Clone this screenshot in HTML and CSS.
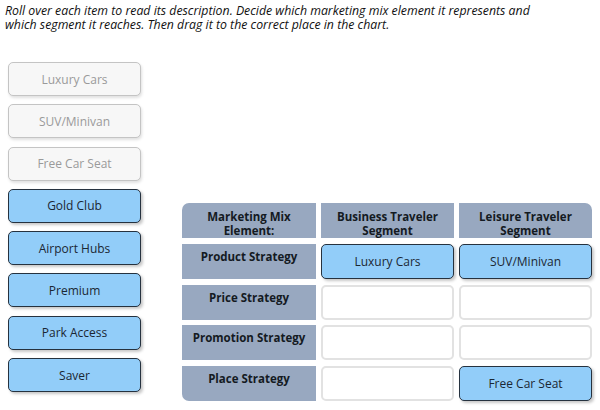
FILE: index.html
```html
<!DOCTYPE html>
<html>
<head>
<meta charset="utf-8">
<link rel="stylesheet" href="styles.css">
</head>
<body>
<div class="page">
  <p class="intro">Roll over each item to read its description. Decide which marketing mix element it represents and which segment it reaches. Then drag it to the correct place in the chart.</p>
  <div class="work">
    <div class="bank">
      <div class="chip used">Luxury Cars</div>
      <div class="chip used">SUV/Minivan</div>
      <div class="chip used">Free Car Seat</div>
      <div class="chip">Gold Club</div>
      <div class="chip">Airport Hubs</div>
      <div class="chip">Premium</div>
      <div class="chip">Park Access</div>
      <div class="chip">Saver</div>
    </div>
    <div class="chart">
      <div class="head tl">Marketing Mix<br>Element:</div>
      <div class="head">Business Traveler<br>Segment</div>
      <div class="head tr">Leisure Traveler<br>Segment</div>

      <div class="label">Product Strategy</div>
      <div class="drop filled">Luxury Cars</div>
      <div class="drop filled">SUV/Minivan</div>

      <div class="label">Price Strategy</div>
      <div class="drop"></div>
      <div class="drop"></div>

      <div class="label">Promotion Strategy</div>
      <div class="drop"></div>
      <div class="drop"></div>

      <div class="label bl">Place Strategy</div>
      <div class="drop"></div>
      <div class="drop filled">Free Car Seat</div>
    </div>
  </div>
</div>
</body>
</html>
```
FILE: styles.css
```css
html, body {
  margin: 0;
  padding: 0;
  background: #ffffff;
}
.page {
  width: 600px;
  height: 410px;
  font-family: "Open Sans", "Noto Sans", sans-serif;
  color: #1a1a1a;
  box-sizing: border-box;
  padding: 4px 0 0 5px;
}
.intro {
  margin: 0;
  font-style: italic;
  font-size: 12.3px;
  line-height: 14px;
  width: 545px;
  color: #111;
}
.work {
  display: flex;
  margin-top: 30px;
  padding-left: 3px;
}
.bank {
  display: flex;
  flex-direction: column;
  gap: 8.3px;
  width: 133px;
}
.chip {
  height: 34px;
  box-sizing: border-box;
  border: 1px solid #26323f;
  border-radius: 5px;
  background: #92cdf9;
  box-shadow: 2px 2px 3px rgba(0, 0, 0, 0.22);
  display: flex;
  align-items: center;
  justify-content: center;
  font-size: 12px;
  color: #1b2733;
}
.chip.used {
  background: #f7f7f7;
  border-color: #c4c4c4;
  color: #9a9a9a;
  box-shadow: 1px 2px 3px rgba(0, 0, 0, 0.12);
}
.chart {
  margin-left: 41px;
  margin-top: 141px;
  display: grid;
  grid-template-columns: 134px 133px 133px;
  grid-template-rows: repeat(5, 35px);
  column-gap: 5px;
  row-gap: 5.75px;
}
.head, .label {
  background: #98a8c0;
  font-weight: 700;
  font-size: 11.5px;
  line-height: 14px;
  color: #141a22;
  text-align: center;
  padding-top: 6px;
  box-sizing: border-box;
}
.head {
  padding-top: 7px;
}
.tl { border-top-left-radius: 7px; }
.tr { border-top-right-radius: 7px; }
.bl { border-bottom-left-radius: 7px; }
.drop {
  box-sizing: border-box;
  border: 2px solid #e2e2e2;
  border-radius: 5px;
  background: #ffffff;
  display: flex;
  align-items: center;
  justify-content: center;
  font-size: 12px;
  color: #1b2733;
}
.drop.filled {
  border: 1px solid #26323f;
  background: #92cdf9;
  box-shadow: 2px 2px 3px rgba(0, 0, 0, 0.22);
}
```
